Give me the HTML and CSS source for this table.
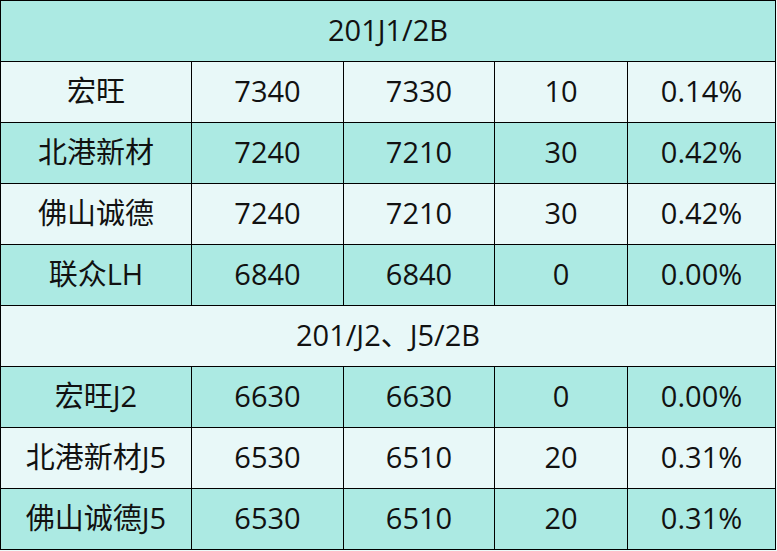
FILE: index.html
```html
<!DOCTYPE html>
<html lang="zh-CN">
<head>
<meta charset="utf-8">
<title>价格表</title>
<link rel="stylesheet" href="styles.css">
</head>
<body>
<table class="price-table">
  <colgroup>
    <col class="c1"><col class="c2"><col class="c3"><col class="c4"><col class="c5">
  </colgroup>
  <tbody>
    <tr class="teal"><td colspan="5">201J1/2B</td></tr>
    <tr class="light"><td>宏旺</td><td>7340</td><td>7330</td><td>10</td><td>0.14%</td></tr>
    <tr class="teal"><td>北港新材</td><td>7240</td><td>7210</td><td>30</td><td>0.42%</td></tr>
    <tr class="light"><td>佛山诚德</td><td>7240</td><td>7210</td><td>30</td><td>0.42%</td></tr>
    <tr class="teal"><td>联众LH</td><td>6840</td><td>6840</td><td>0</td><td>0.00%</td></tr>
    <tr class="light"><td colspan="5">201/J2、J5/2B</td></tr>
    <tr class="teal"><td>宏旺J2</td><td>6630</td><td>6630</td><td>0</td><td>0.00%</td></tr>
    <tr class="light"><td>北港新材J5</td><td>6530</td><td>6510</td><td>20</td><td>0.31%</td></tr>
    <tr class="teal"><td>佛山诚德J5</td><td>6530</td><td>6510</td><td>20</td><td>0.31%</td></tr>
  </tbody>
</table>
</body>
</html>
```
FILE: styles.css
```css
html, body {
  margin: 0;
  padding: 0;
  background: #eefaf9;
}
.price-table {
  border-collapse: collapse;
  width: 775px;
  table-layout: fixed;
  font-family: "Open Sans", "Noto Sans CJK SC", sans-serif;
  font-size: 29px;
  color: #111;
}
.c1 { width: 191px; }
.c2 { width: 152px; }
.c3 { width: 151px; }
.c4 { width: 133px; }
.c5 { width: 148px; }
.price-table td {
  border: 1px solid #000;
  height: 57px;
  padding: 0 0 3px;
  text-align: center;
  vertical-align: middle;
  line-height: 1;
}
.teal td { background: #aceae3; }
.light td { background: #e8f8f8; }
```
